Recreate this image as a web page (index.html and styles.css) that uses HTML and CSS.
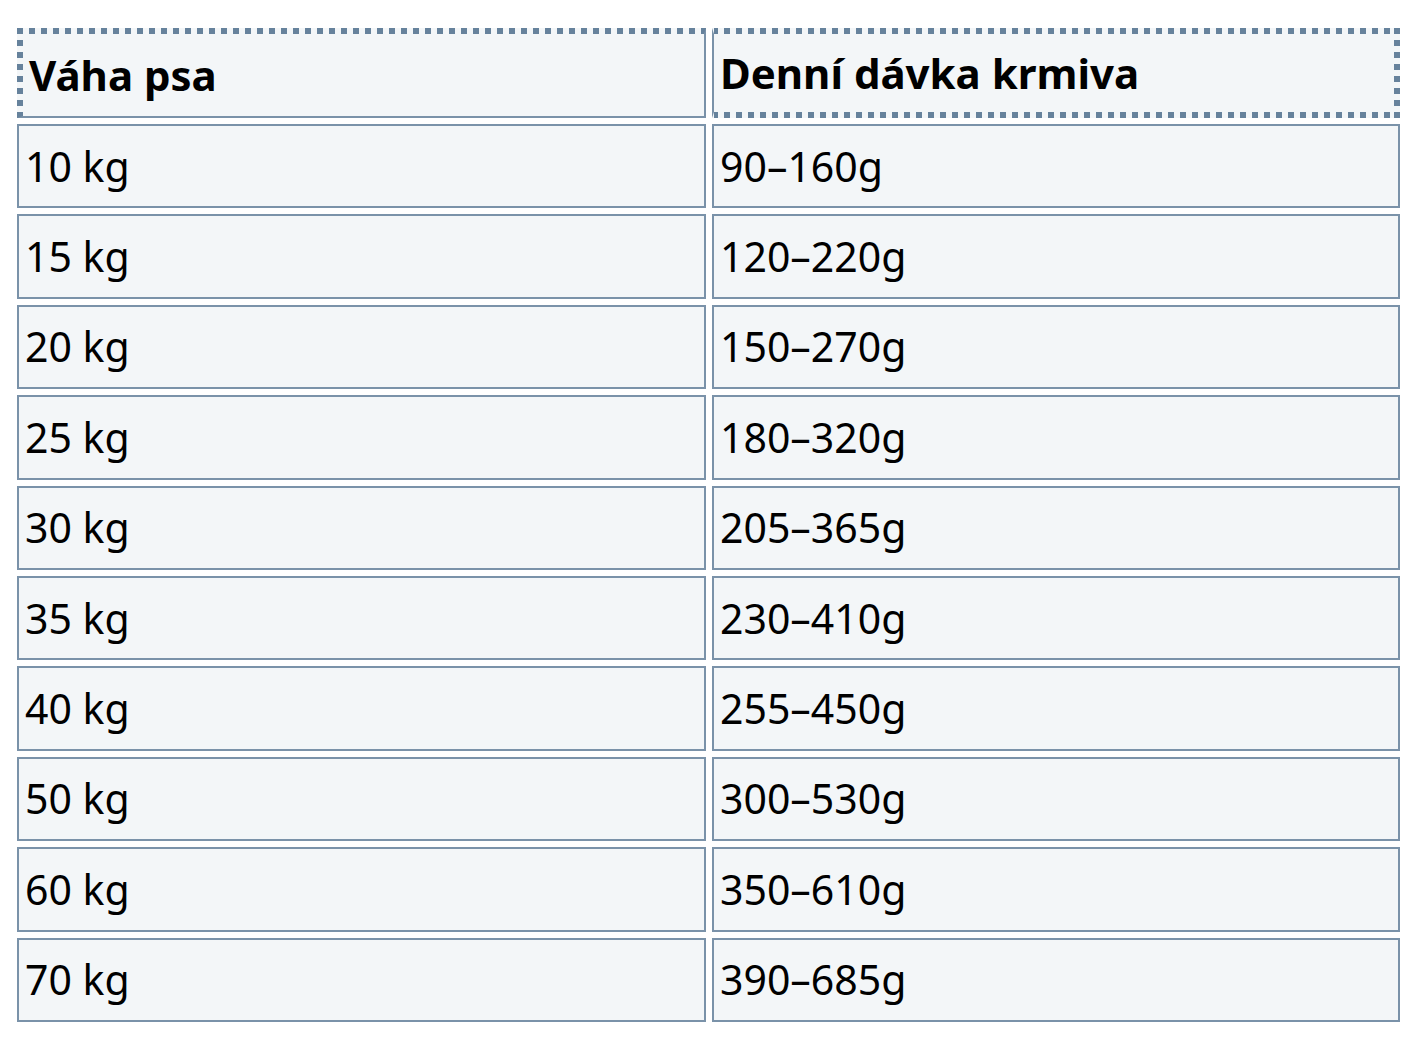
FILE: index.html
```html
<!DOCTYPE html>
<html lang="cs">
<head>
<meta charset="utf-8">
<title>Dávkování krmiva</title>
<link rel="stylesheet" href="styles.css">
</head>
<body>
<table class="feed">
  <thead>
    <tr>
      <th class="h1">Váha psa</th>
      <th class="h2">Denní dávka krmiva</th>
    </tr>
  </thead>
  <tbody>
    <tr><td>10 kg</td><td>90–160g</td></tr>
    <tr><td>15 kg</td><td>120–220g</td></tr>
    <tr><td>20 kg</td><td>150–270g</td></tr>
    <tr><td>25 kg</td><td>180–320g</td></tr>
    <tr><td>30 kg</td><td>205–365g</td></tr>
    <tr><td>35 kg</td><td>230–410g</td></tr>
    <tr><td>40 kg</td><td>255–450g</td></tr>
    <tr><td>50 kg</td><td>300–530g</td></tr>
    <tr><td>60 kg</td><td>350–610g</td></tr>
    <tr><td>70 kg</td><td>390–685g</td></tr>
  </tbody>
</table>
</body>
</html>
```
FILE: styles.css
```css
html, body {
  margin: 0;
  padding: 0;
  background: #ffffff;
}

body {
  font-family: "Noto Sans", "DejaVu Sans", sans-serif;
  color: #000000;
}

.feed {
  border-collapse: separate;
  border-spacing: 6px 6px;
  table-layout: fixed;
  width: 1395px;
  margin: 22px 0 0 11px;
}

.feed th,
.feed td {
  box-sizing: border-box;
  background-color: #f3f6f8;
  text-align: left;
  vertical-align: middle;
  white-space: nowrap;
}

.feed td {
  height: 84.4px;
  border: 2px solid #7a92a9;
  padding: 0 6px;
  font-size: 41px;
  font-weight: 400;
  line-height: 1.2;
}

.feed th {
  height: 90px;
  padding: 0 6px;
  font-size: 42px;
  font-weight: 700;
  line-height: 1.2;
  background-repeat: no-repeat;
  background-origin: border-box;
  background-clip: border-box;
}

/* first header cell: dotted top + left, solid right + bottom */
.feed th.h1 {
  width: 689px;
  border-top: 6px solid transparent;
  border-left: 6px solid transparent;
  border-right: 2px solid #7a92a9;
  border-bottom: 2px solid #7a92a9;
  background-image:
    repeating-linear-gradient(to right, #66829c 0 6px, transparent 6px 12px),
    repeating-linear-gradient(to bottom, #66829c 0 6px, transparent 6px 12px);
  background-size: 100% 6px, 6px 100%;
  background-position: left top, left top;
}

/* second header cell: dotted top + right + bottom, solid left */
.feed th.h2 {
  border-top: 6px solid transparent;
  border-right: 6px solid transparent;
  border-bottom: 6px solid transparent;
  border-left: 2px solid #7a92a9;
  background-image:
    repeating-linear-gradient(to right, #66829c 0 6px, transparent 6px 12px),
    repeating-linear-gradient(to right, #66829c 0 6px, transparent 6px 12px),
    repeating-linear-gradient(to bottom, #66829c 0 6px, transparent 6px 12px);
  background-size: 100% 6px, 100% 6px, 6px 100%;
  background-position: left top, left bottom, right top;
}
```
